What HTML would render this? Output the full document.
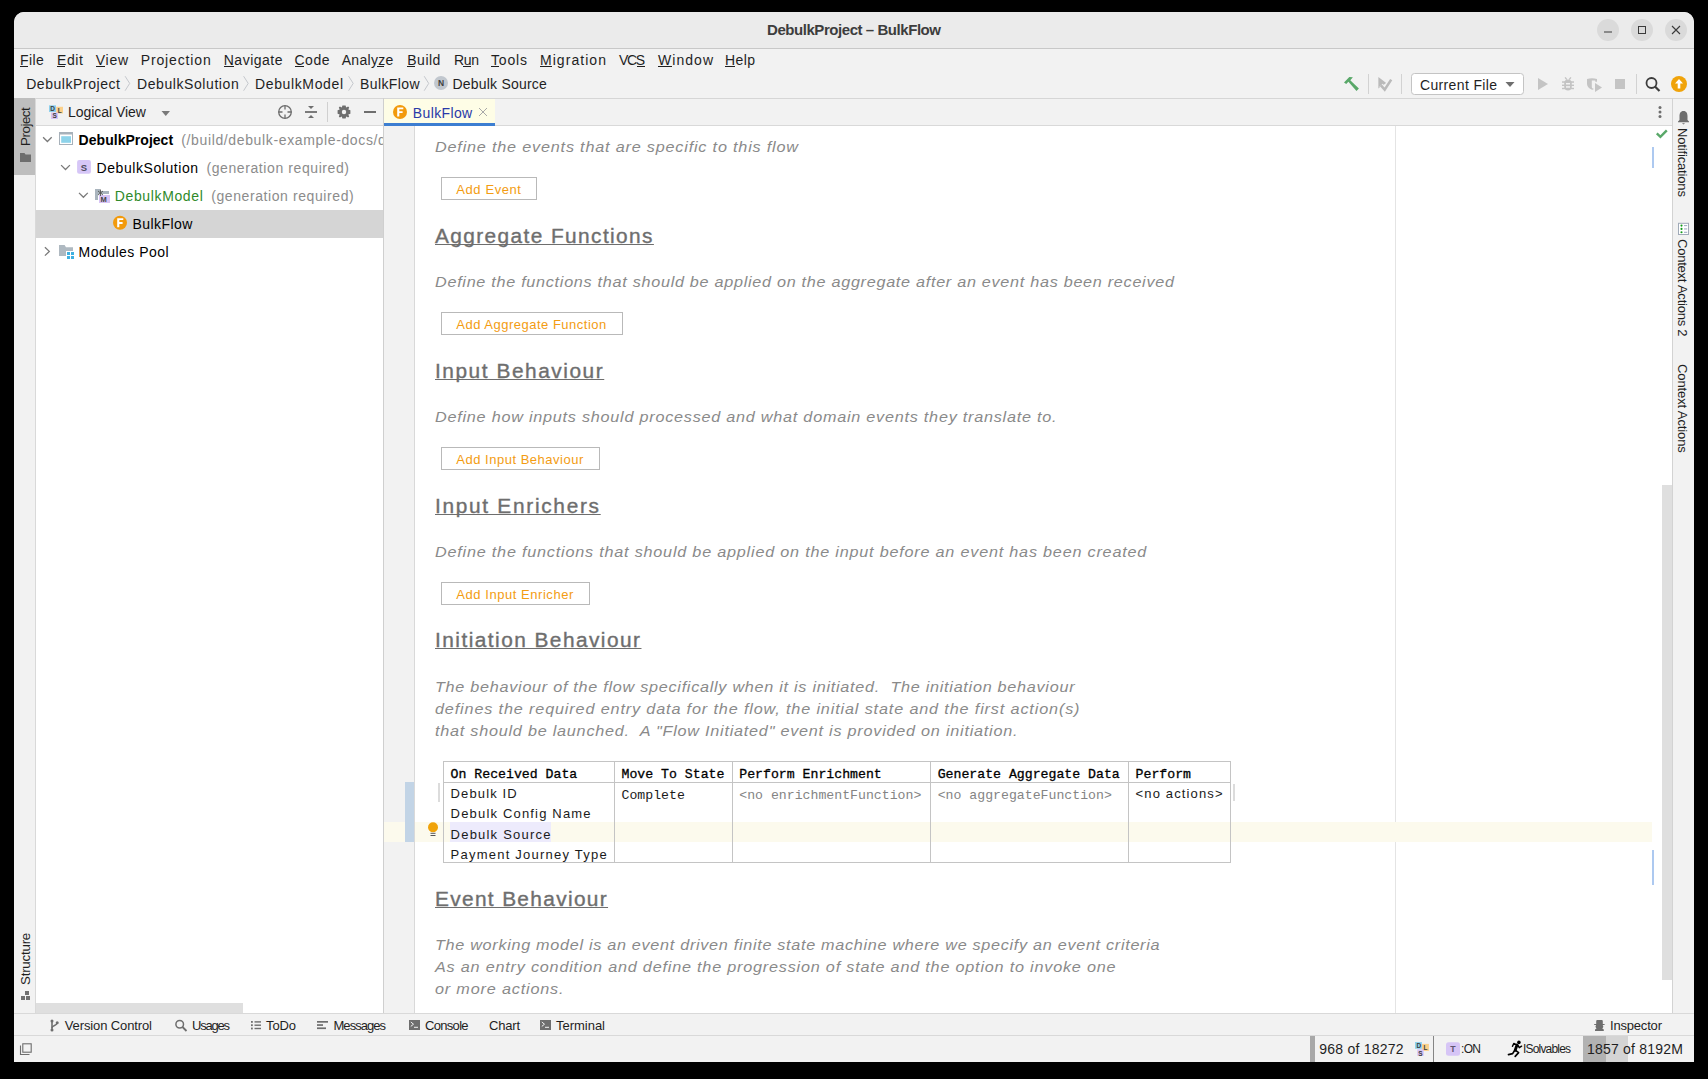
<!DOCTYPE html>
<html><head><meta charset="utf-8"><title>DebulkProject – BulkFlow</title>
<style>
html,body{margin:0;padding:0;background:#000;width:1708px;height:1079px;overflow:hidden;font-family:"Liberation Sans",sans-serif}
.r{position:absolute}
.t{position:absolute;white-space:pre}
.hd{text-decoration:underline;text-underline-offset:1.4px;text-decoration-thickness:1.3px;text-decoration-skip-ink:none;-webkit-text-stroke:0.35px}
.mb{-webkit-text-stroke:0.3px #000}
.btn{position:absolute;border:1px solid #b9b9b9;background:#fff}
svg{position:absolute;overflow:visible}
</style></head><body>
<!-- window -->
<div class="r" style="left:14px;top:12px;width:1680px;height:1050px;background:#f2f2f2;border-radius:10px 10px 0 0;overflow:hidden">
  <div class="r" style="left:0;top:0;width:1680px;height:36px;background:#ebebeb"></div>
  <div class="r" style="left:0;top:36px;width:1680px;height:1px;background:#c8c8c8"></div>
</div>
<!-- separator under toolbar -->
<div class="r" style="left:14px;top:98px;width:1680px;height:1px;background:#d6d6d6"></div>
<!-- left stripe -->
<div class="r" style="left:14px;top:99px;width:21px;height:914px;background:#f2f2f2"></div>
<div class="r" style="left:14px;top:98px;width:21px;height:77px;background:#bebebe"></div>
<div class="r" style="left:35px;top:98px;width:1px;height:915px;background:#d9d9d9"></div>
<!-- project panel -->
<div class="r" style="left:36px;top:99px;width:347px;height:26px;background:#f2f2f2"></div>
<div class="r" style="left:36px;top:125px;width:347px;height:1px;background:#d9d9d9"></div>
<div class="r" style="left:36px;top:126px;width:347px;height:887px;background:#fff"></div>
<div class="r" style="left:36px;top:210px;width:347px;height:28px;background:#d5d5d5"></div>
<div class="r" style="left:36px;top:1003px;width:207px;height:10px;background:#dfdfdf"></div>
<div class="r" style="left:383px;top:98px;width:1px;height:915px;background:#cfcfcf"></div>
<!-- editor tabs -->
<div class="r" style="left:384px;top:99px;width:1288px;height:26px;background:#f2f2f2"></div>
<div class="r" style="left:384px;top:125px;width:1288px;height:1px;background:#d9d9d9"></div>
<div class="r" style="left:384px;top:99px;width:111px;height:24px;background:#fefde6"></div>
<div class="r" style="left:384px;top:123px;width:111px;height:3px;background:#3d7ed1"></div>
<!-- gutter + editor -->
<div class="r" style="left:384px;top:126px;width:30px;height:887px;background:#f2f2f2"></div>
<div class="r" style="left:414px;top:126px;width:1px;height:887px;background:#d9d9d9"></div>
<div class="r" style="left:415px;top:126px;width:1257px;height:887px;background:#fff"></div>
<div class="r" style="left:1395px;top:126px;width:1px;height:887px;background:#e4e4e4"></div>
<div class="r" style="left:384px;top:822px;width:21px;height:20px;background:#fcfaed"></div>
<div class="r" style="left:415px;top:822px;width:1237px;height:20px;background:#fcfaed"></div>
<div class="r" style="left:405px;top:782px;width:9px;height:60px;background:#c2d4e6"></div>
<div class="r" style="left:1662px;top:485px;width:10px;height:495px;background:#dfdfdf"></div>
<div class="r" style="left:1652px;top:147px;width:2px;height:21px;background:#adc9f0"></div>
<div class="r" style="left:1652px;top:850px;width:2px;height:35px;background:#adc9f0"></div>
<!-- right stripe -->
<div class="r" style="left:1672px;top:98px;width:1px;height:915px;background:#d3d3d3"></div>
<div class="r" style="left:1673px;top:99px;width:21px;height:914px;background:#f2f2f2"></div>
<!-- bottom bars -->
<div class="r" style="left:14px;top:1013px;width:1680px;height:1px;background:#d9d9d9"></div>
<div class="r" style="left:14px;top:1014px;width:1680px;height:21px;background:#f2f2f2"></div>
<div class="r" style="left:14px;top:1035px;width:1680px;height:1px;background:#d9d9d9"></div>
<div class="r" style="left:14px;top:1036px;width:1680px;height:26px;background:#f2f2f2"></div>
<div class="r" style="left:1310px;top:1036px;width:5px;height:26px;background:#a8a8a8"></div>
<div class="r" style="left:1433px;top:1036px;width:1px;height:26px;background:#858585"></div>
<div class="r" style="left:1583px;top:1036px;width:23px;height:26px;background:#b2b2b2"></div>
<div class="r" style="left:1606px;top:1036px;width:22px;height:26px;background:#d4d4d4"></div>
<!-- table -->
<div class="r" style="left:443px;top:761px;width:787px;height:100px;border:1px solid #c4c4c4;box-sizing:border-box;width:788px;height:102px"></div>
<div class="r" style="left:443px;top:782px;width:788px;height:1px;background:#c4c4c4"></div>
<div class="r" style="left:614px;top:761px;width:1px;height:102px;background:#c4c4c4"></div>
<div class="r" style="left:732px;top:761px;width:1px;height:102px;background:#c4c4c4"></div>
<div class="r" style="left:930px;top:761px;width:1px;height:102px;background:#c4c4c4"></div>
<div class="r" style="left:1128px;top:761px;width:1px;height:102px;background:#c4c4c4"></div>
<div class="r" style="left:450px;top:822px;width:101px;height:20px;background:#edebfc"></div>
<div class="r" style="left:438px;top:783px;width:2px;height:19px;background:#dcdcdc"></div>
<div class="r" style="left:1233px;top:784px;width:2px;height:17px;background:#dcdcdc"></div>
<div class="btn" style="left:441px;top:177px;width:94px;height:21px"></div><div class="btn" style="left:441px;top:312px;width:180px;height:21px"></div><div class="btn" style="left:441px;top:447px;width:157px;height:21px"></div><div class="btn" style="left:441px;top:582px;width:147px;height:21px"></div>
<!-- window controls -->
<svg style="left:0;top:0" width="1708" height="1079" viewBox="0 0 1708 1079">
  <circle cx="1608" cy="30" r="11" fill="#dadada"/>
  <circle cx="1642" cy="30" r="11" fill="#dadada"/>
  <circle cx="1676" cy="30" r="11" fill="#dadada"/>
  <rect x="1604" y="31.5" width="8" height="1" fill="#3a3a3a"/>
  <rect x="1638.5" y="26.5" width="7" height="7" fill="none" stroke="#3a3a3a" stroke-width="1"/>
  <path d="M1672 26 L1680 34 M1680 26 L1672 34" stroke="#3a3a3a" stroke-width="1.1" fill="none"/>
  <!-- menu mnemonic underlines -->
  <g fill="#1f1f1f">
    <rect x="20" y="66" width="8" height="1"/>
    <rect x="57" y="66" width="8" height="1"/>
    <rect x="96" y="66" width="9" height="1"/>
    <rect x="224" y="66" width="10" height="1"/>
    <rect x="295" y="66" width="9" height="1"/>
    <rect x="377" y="66" width="7" height="1"/>
    <rect x="407" y="66" width="8" height="1"/>
    <rect x="463" y="66" width="8" height="1"/>
    <rect x="491" y="66" width="8" height="1"/>
    <rect x="540" y="66" width="12" height="1"/>
    <rect x="637" y="66" width="8" height="1"/>
    <rect x="658" y="66" width="14" height="1"/>
    <rect x="725" y="66" width="10" height="1"/>
  </g>
  <!-- breadcrumb chevrons -->
  <g stroke="#c5c8cd" stroke-width="1" fill="none">
    <path d="M125.1 76.2 L129.7 83.4 L125.1 90.7"/>
    <path d="M243.6 76.2 L248.2 83.4 L243.6 90.7"/>
    <path d="M348.6 76.2 L353.2 83.4 L348.6 90.7"/>
    <path d="M424.2 76.2 L428.7 83.4 L424.2 90.7"/>
  </g>
  <circle cx="441" cy="83" r="7" fill="#c1c7ce"/>
  <text x="441" y="86.2" font-family="'Liberation Sans',sans-serif" font-weight="700" font-size="8.5" fill="#404040" text-anchor="middle">N</text>
  <!-- toolbar right -->
  <g fill="#59a869">
    <path d="M1344 82.4 L1349.3 77 L1352.9 77.3 L1350.3 80.3 L1353.1 83.1 L1358.9 88.5 L1356.5 90.9 L1348.4 81.8 L1346.2 84.1 Z"/>
  </g>
  <rect x="1368" y="74" width="1" height="20" fill="#d2d2d2"/>
  <path d="M1378.4 77.1 L1386.2 82.9 L1378.4 88.5 Z" fill="#bababa"/>
  <path d="M1380.9 85.4 L1384.7 89.6 L1391.2 79.6" stroke="#f2f2f2" stroke-width="4.6" fill="none"/>
  <path d="M1380.9 85.4 L1384.7 89.6 L1391.2 79.6" stroke="#bababa" stroke-width="2.6" fill="none"/>
  <rect x="1401" y="74" width="1" height="20" fill="#d2d2d2"/>
  <rect x="1411.5" y="73.5" width="112" height="21" rx="3" fill="#fff" stroke="#c4c4c4"/>
  <path d="M1505.5 82 L1514.5 82 L1510 87 Z" fill="#6e6e6e"/>
  <path d="M1538 78 L1548 84 L1538 90 Z" fill="#c4c4c4"/>
  <g fill="#c4c4c4">
    <path d="M1565.1 77.3 L1566.8 79.6 M1570.9 77.3 L1569.2 79.6" stroke="#c4c4c4" stroke-width="1.4"/>
    <path d="M1568 79.6 C1570.5 79.6 1571.8 81 1571.8 83 L1571.8 87 C1571.8 89.2 1570.2 90.6 1568 90.6 C1565.8 90.6 1564.2 89.2 1564.2 87 L1564.2 83 C1564.2 81 1565.5 79.6 1568 79.6 Z"/>
    <rect x="1562" y="81.3" width="12" height="1.5"/>
    <rect x="1562" y="84.6" width="12" height="1.4"/>
    <rect x="1562" y="87.8" width="12" height="1.4"/>
  </g>
  <rect x="1566" y="83" width="4" height="1.5" fill="#f2f2f2"/>
  <rect x="1566" y="86.2" width="4" height="1.5" fill="#f2f2f2"/>
  <g fill="#c4c4c4">
    <path d="M1587 79 Q1592 77.6 1597 79 L1597 81.8 L1595.3 81.8 L1595.3 80.4 L1591.8 80.4 L1591.8 87.3 Q1591.8 88.6 1593.3 88.6 L1593.6 89.3 Q1592.5 90 1591.5 89.6 Q1587.3 87.5 1587 84 Z"/>
    <path d="M1595 83 L1602 87.5 L1595 92 Z"/>
  </g>
  <rect x="1615" y="79" width="10" height="10" fill="#c4c4c4"/>
  <rect x="1636" y="74" width="1" height="20" fill="#d2d2d2"/>
  <circle cx="1651.5" cy="83" r="5" fill="none" stroke="#3d3d3d" stroke-width="1.8"/>
  <path d="M1655 86.5 L1659.5 91" stroke="#3d3d3d" stroke-width="2.2"/>
  <circle cx="1679" cy="84" r="8" fill="#f0a30a"/>
  <path d="M1679 79 L1683 83.5 L1680.3 83.5 L1680.3 88.5 L1677.7 88.5 L1677.7 83.5 L1675 83.5 Z" fill="#fff"/>
  <!-- left stripe -->
  <path d="M20 153 L24.5 153 L25.5 154.5 L31 154.5 L31 162 L20 162 Z" fill="#6e6e6e"/>
  <g fill="#6e6e6e">
    <rect x="25" y="991" width="4" height="4"/>
    <rect x="21" y="996" width="4" height="4"/>
    <rect x="26" y="996" width="4" height="4"/>
  </g>
  <!-- panel header -->
  <rect x="49" y="105.3" width="7" height="6.7" fill="#8fd0ec"/>
  <rect x="56.2" y="106.8" width="6.8" height="6.6" fill="#fbd08a"/>
  <rect x="51" y="112.5" width="7" height="6.5" fill="#d7c4f5"/>
  <g font-family="'Liberation Sans',sans-serif" font-size="6.5" fill="#3d3d3d" font-weight="700" text-anchor="middle">
    <text x="52.6" y="111.1">D</text><text x="59.7" y="112.7">L</text><text x="54.6" y="118.4">S</text>
  </g>
  <path d="M161.5 111 L170 111 L165.75 116 Z" fill="#7a7a7a"/>
  <g stroke="#6e6e6e" fill="none">
    <circle cx="285" cy="112" r="6.3" stroke-width="1.3"/>
    <path d="M285 105.5 V109.5 M285 114.5 V118.5 M278.5 112 H282.5 M287.5 112 H291.5" stroke-width="1.3"/>
    <path d="M305 112 H317" stroke-width="1.8"/>
  </g>
  <g fill="#6e6e6e">
    <path d="M308 106 L314 106 L311 109 Z"/>
    <path d="M308 118 L314 118 L311 115 Z"/>
    <path d="M344 105.6 L345.6 105.6 L346.2 107.6 L348.1 106.5 L349.2 107.6 L348.3 109.5 L350.4 110.2 L350.4 113.8 L348.3 114.5 L349.2 116.4 L348.1 117.5 L346.2 116.4 L345.6 118.4 L342.4 118.4 L341.8 116.4 L339.9 117.5 L338.8 116.4 L339.7 114.5 L337.6 113.8 L337.6 110.2 L339.7 109.5 L338.8 107.6 L339.9 106.5 L341.8 107.6 L342.4 105.6 Z"/>
    <rect x="364" y="111" width="12" height="2"/>
  </g>
  <circle cx="344" cy="112" r="2.2" fill="#f2f2f2"/>
  <rect x="327" y="102" width="1" height="20" fill="#d0d0d0"/>
  <!-- tree -->
  <g stroke="#7a7a7a" stroke-width="1.3" fill="none">
    <path d="M43.1 137.2 L47.4 141.5 L51.7 137.2"/>
    <path d="M61.1 165.1 L65.5 169.5 L69.9 165.1"/>
    <path d="M79 192.9 L83.4 197.3 L87.8 192.9"/>
    <path d="M44.9 247.2 L49.3 251.4 L44.9 255.6"/>
  </g>
  <rect x="59.5" y="132.5" width="13" height="12" fill="#fff" stroke="#a7b1ba" stroke-width="1"/>
  <rect x="59" y="132" width="14" height="2.5" fill="#a7b1ba"/>
  <rect x="61.2" y="136.2" width="9.8" height="6.6" fill="#8dd3ea"/>
  <rect x="77.1" y="160" width="13.8" height="13.7" rx="2" fill="#d6c6f7"/>
  <text x="84" y="170.5" font-family="'Liberation Sans',sans-serif" font-weight="700" font-size="9.5" fill="#4c4a5c" text-anchor="middle">S</text>
  <g fill="#a9b4bd">
    <rect x="95" y="189" width="3" height="11"/>
    <rect x="95" y="189" width="5" height="2"/>
    <rect x="97" y="191" width="12" height="3"/>
  </g>
  <rect x="99" y="195" width="11" height="8" fill="#d7c4f5"/>
  <path d="M100.5 189.5 V196 M98 191 L103 195 M103 191 L98 195" stroke="#555" stroke-width="0.9"/>
  <text x="103.6" y="201.7" font-family="'Liberation Sans',sans-serif" font-weight="700" font-size="7.5" fill="#444" text-anchor="middle">M</text>
  <circle cx="120" cy="222.8" r="7" fill="#f29a0c"/>
  <path d="M117.2 218.3 H123.3 V220.1 H119.3 V222.1 H122.6 V223.9 H119.3 V227.3 H117.2 Z" fill="#fff"/>
  <g fill="#afb9c1">
    <path d="M59 245 L64.6 245 L66 247.2 L73 247.2 L73 256 L59 256 Z"/>
  </g>
  <rect x="66" y="251" width="9" height="9" fill="#fff"/>
  <g fill="#3fb0e0">
    <rect x="67" y="252" width="3" height="3"/><rect x="71" y="252" width="3" height="3"/>
    <rect x="67" y="256" width="3" height="3"/><rect x="71" y="256" width="3" height="3"/>
  </g>
  <!-- tab -->
  <circle cx="400" cy="112" r="7" fill="#f29a0c"/>
  <path d="M397.2 107.5 H403.3 V109.3 H399.3 V111.3 H402.6 V113.1 H399.3 V116.5 H397.2 Z" fill="#fff"/>
  <path d="M479 108 L487 116 M487 108 L479 116" stroke="#a8a8a8" stroke-width="1"/>
  <!-- editor right -->
  <g fill="#6e6e6e">
    <circle cx="1660" cy="107.5" r="1.5"/><circle cx="1660" cy="112" r="1.5"/><circle cx="1660" cy="116.5" r="1.5"/>
  </g>
  <path d="M1656.8 133.3 L1660.4 136.8 L1666.8 130.3" stroke="#59a869" stroke-width="2.4" fill="none"/>
  <!-- lightbulb -->
  <circle cx="433" cy="827.3" r="5" fill="#f0a30a"/>
  <path d="M430 830 L436 830 L435 832 L431 832 Z" fill="#f0a30a"/>
  <rect x="430.5" y="832.8" width="5" height="1" fill="#555"/>
  <rect x="430.5" y="835" width="5" height="1" fill="#555"/>
  <!-- right stripe -->
  <path d="M1683.5 111 C1680.5 111 1679.5 113.5 1679.5 116 L1679.5 120 L1678 121.5 L1678 122.3 L1689 122.3 L1689 121.5 L1687.5 120 L1687.5 116 C1687.5 113.5 1686.5 111 1683.5 111 Z" fill="#6e6e6e"/>
  <path d="M1682 123.2 L1685 123.2 L1683.5 124.5 Z" fill="#6e6e6e"/>
  <rect x="1678.5" y="223.3" width="10" height="11.2" fill="#fff" stroke="#a0aab8" stroke-width="1"/>
  <g fill="#129a1a"><circle cx="1681.5" cy="225.6" r="1.05"/><circle cx="1681.5" cy="228.9" r="1.05"/><circle cx="1681.5" cy="232.2" r="1.05"/></g>
  <g fill="#8e9ab8"><rect x="1684" y="225.2" width="3.2" height="0.9"/><rect x="1684" y="228.5" width="3.2" height="0.9"/><rect x="1684" y="231.8" width="3.2" height="0.9"/></g>
  <!-- bottom toolbar icons -->
  <g stroke="#6e6e6e" fill="none">
    <path d="M52 1021 V1030" stroke-width="1.6"/>
    <path d="M52 1028 C52 1025 57 1026 57 1023" stroke-width="1.5"/>
  </g>
  <g fill="#6e6e6e">
    <circle cx="52" cy="1021" r="1.5"/><circle cx="52" cy="1030" r="1.5"/><circle cx="57.2" cy="1022.8" r="1.5"/>
  </g>
  <circle cx="179.7" cy="1024.2" r="3.8" fill="none" stroke="#6e6e6e" stroke-width="1.5"/>
  <path d="M182.5 1027 L186.5 1031" stroke="#6e6e6e" stroke-width="1.8"/>
  <g fill="#6e6e6e">
    <rect x="251" y="1021" width="1.8" height="1.8"/><rect x="254.5" y="1021.2" width="6.5" height="1.4"/>
    <rect x="251" y="1024.3" width="1.8" height="1.8"/><rect x="254.5" y="1024.5" width="6.5" height="1.4"/>
    <rect x="251" y="1027.6" width="1.8" height="1.8"/><rect x="254.5" y="1027.8" width="6.5" height="1.4"/>
    <rect x="317" y="1021" width="11" height="1.7"/>
    <rect x="317" y="1024.2" width="6" height="1.7"/>
    <rect x="317" y="1027.4" width="9" height="1.7"/>
    <rect x="409" y="1020" width="11" height="10"/>
    <rect x="540" y="1020" width="11" height="10"/>
    <path d="M1597.2 1020.1 H1601.8 Q1602.8 1020.1 1602.8 1021.2 V1024 H1604.6 V1024.9 H1602.8 V1025.5 Q1603.8 1026.5 1603 1027.5 L1602.3 1028.5 L1603.8 1029.4 V1031 H1595 V1029.4 L1596.5 1028.5 L1595.8 1027.5 Q1595 1026.5 1596 1025.5 V1024.9 H1594.2 V1024 H1596.2 V1021.2 Q1596.2 1020.1 1597.2 1020.1 Z"/>
  </g>
  <path d="M410.8 1022 L413.5 1024.2 L410.8 1026.4 M414 1027.3 H418" stroke="#f2f2f2" stroke-width="1" fill="none"/>
  <path d="M541.8 1022 L544.5 1024.2 L541.8 1026.4 M545 1027.3 H549" stroke="#f2f2f2" stroke-width="1" fill="none"/>
  <!-- status bar -->
  <path d="M20.5 1045.5 V1054.5 H29.5" stroke="#6e6e6e" stroke-width="1.1" fill="none"/>
  <rect x="22.8" y="1043.8" width="8.4" height="8.4" fill="none" stroke="#6e6e6e" stroke-width="1.1"/>
  <rect x="1415" y="1042" width="6.9" height="6.8" fill="#8fd0ec"/>
  <rect x="1422" y="1043.9" width="6.9" height="7" fill="#fbd08a"/>
  <rect x="1417.2" y="1049.3" width="6.5" height="6.5" fill="#d7c4f5"/>
  <g font-family="'Liberation Sans',sans-serif" font-size="6.5" fill="#3d3d3d" font-weight="700" text-anchor="middle">
    <text x="1418.9" y="1048.3">D</text><text x="1425.6" y="1050.3">L</text><text x="1420.4" y="1055.5">S</text>
  </g>
  <rect x="1446" y="1042.2" width="14" height="13.5" rx="2.5" fill="#d6c5f6"/>
  <text x="1453" y="1052.2" font-family="'Liberation Sans',sans-serif" font-weight="700" font-size="8.8" fill="#5f5670" text-anchor="middle">T</text>
  <g fill="none" stroke="#000" stroke-linecap="round" stroke-linejoin="round">
    <path d="M1517 1045 L1515.2 1050.3" stroke-width="2.8"/>
    <path d="M1516.3 1044.6 L1513.8 1043.5 L1512.5 1046.3" stroke-width="1.5"/>
    <path d="M1517.8 1045.2 L1519.3 1047.6 L1521.6 1046.2" stroke-width="1.5"/>
    <path d="M1514.8 1050.3 L1512.6 1053.6 L1508.5 1054.6" stroke-width="1.7"/>
    <path d="M1515.6 1050.4 L1518.6 1052.6 L1515.2 1056.3" stroke-width="1.7"/>
  </g>
  <circle cx="1518.9" cy="1042.4" r="1.8" fill="#000"/>
</svg>

<div id="t0" class="t" style="left:767.00px;font-size:15px;font-family:'Liberation Sans', sans-serif;color:#3d3d3d;font-weight:700;letter-spacing:-0.444px;top:21.90px;line-height:15px;">DebulkProject – BulkFlow</div><div id="t1" class="t" style="left:20.00px;font-size:14px;font-family:'Liberation Sans', sans-serif;color:#1f1f1f;letter-spacing:0.396px;top:53.15px;line-height:14px;">File</div><div id="t2" class="t" style="left:57.00px;font-size:14px;font-family:'Liberation Sans', sans-serif;color:#1f1f1f;letter-spacing:0.625px;top:53.15px;line-height:14px;">Edit</div><div id="t3" class="t" style="left:95.75px;font-size:14px;font-family:'Liberation Sans', sans-serif;color:#1f1f1f;letter-spacing:0.719px;top:53.15px;line-height:14px;">View</div><div id="t4" class="t" style="left:140.75px;font-size:14px;font-family:'Liberation Sans', sans-serif;color:#1f1f1f;letter-spacing:0.859px;top:53.15px;line-height:14px;">Projection</div><div id="t5" class="t" style="left:223.75px;font-size:14px;font-family:'Liberation Sans', sans-serif;color:#1f1f1f;letter-spacing:0.498px;top:53.15px;line-height:14px;">Navigate</div><div id="t6" class="t" style="left:294.50px;font-size:14px;font-family:'Liberation Sans', sans-serif;color:#1f1f1f;letter-spacing:0.510px;top:53.15px;line-height:14px;">Code</div><div id="t7" class="t" style="left:341.75px;font-size:14px;font-family:'Liberation Sans', sans-serif;color:#1f1f1f;letter-spacing:0.281px;top:53.15px;line-height:14px;">Analyze</div><div id="t8" class="t" style="left:407.30px;font-size:14px;font-family:'Liberation Sans', sans-serif;color:#1f1f1f;letter-spacing:0.490px;top:53.15px;line-height:14px;">Build</div><div id="t9" class="t" style="left:454.00px;font-size:14px;font-family:'Liberation Sans', sans-serif;color:#1f1f1f;letter-spacing:-0.344px;top:53.15px;line-height:14px;">Run</div><div id="t10" class="t" style="left:491.00px;font-size:14px;font-family:'Liberation Sans', sans-serif;color:#1f1f1f;letter-spacing:0.828px;top:53.15px;line-height:14px;">Tools</div><div id="t11" class="t" style="left:540.00px;font-size:14px;font-family:'Liberation Sans', sans-serif;color:#1f1f1f;letter-spacing:1.051px;top:53.15px;line-height:14px;">Migration</div><div id="t12" class="t" style="left:619.00px;font-size:14px;font-family:'Liberation Sans', sans-serif;color:#1f1f1f;letter-spacing:-1.398px;top:53.15px;line-height:14px;">VCS</div><div id="t13" class="t" style="left:658.00px;font-size:14px;font-family:'Liberation Sans', sans-serif;color:#1f1f1f;letter-spacing:1.041px;top:53.15px;line-height:14px;">Window</div><div id="t14" class="t" style="left:725.00px;font-size:14px;font-family:'Liberation Sans', sans-serif;color:#1f1f1f;letter-spacing:0.401px;top:53.15px;line-height:14px;">Help</div><div id="t15" class="t" style="left:26.20px;font-size:14px;font-family:'Liberation Sans', sans-serif;color:#1f1f1f;letter-spacing:0.554px;top:77.15px;line-height:14px;">DebulkProject</div><div id="t16" class="t" style="left:137.00px;font-size:14px;font-family:'Liberation Sans', sans-serif;color:#1f1f1f;letter-spacing:0.579px;top:77.15px;line-height:14px;">DebulkSolution</div><div id="t17" class="t" style="left:255.00px;font-size:14px;font-family:'Liberation Sans', sans-serif;color:#1f1f1f;letter-spacing:0.628px;top:77.15px;line-height:14px;">DebulkModel</div><div id="t18" class="t" style="left:360.00px;font-size:14px;font-family:'Liberation Sans', sans-serif;color:#1f1f1f;letter-spacing:0.386px;top:77.15px;line-height:14px;">BulkFlow</div><div id="t19" class="t" style="left:452.50px;font-size:14px;font-family:'Liberation Sans', sans-serif;color:#1f1f1f;letter-spacing:0.206px;top:77.15px;line-height:14px;">Debulk Source</div><div id="t20" class="t" style="left:1420.00px;font-size:14px;font-family:'Liberation Sans', sans-serif;color:#1f1f1f;letter-spacing:0.351px;top:77.65px;line-height:14px;">Current File</div><div id="t21" class="t" style="left:78.60px;font-size:14px;font-family:'Liberation Sans', sans-serif;color:#000;font-weight:700;letter-spacing:0.030px;top:133.25px;line-height:14px;">DebulkProject</div><div id="t22" class="t" style="left:181.20px;font-size:14px;font-family:'Liberation Sans', sans-serif;color:#8c8c8c;letter-spacing:0.641px;top:133.25px;line-height:14px;">(/build/debulk-example-docs/</div><div id="t23" class="t" style="left:378.00px;font-size:14px;font-family:'Liberation Sans', sans-serif;color:#8c8c8c;top:133.25px;line-height:14px;width:5.0px;overflow:hidden;">debulk</div><div id="t24" class="t" style="left:96.60px;font-size:14px;font-family:'Liberation Sans', sans-serif;color:#000;letter-spacing:0.564px;top:161.15px;line-height:14px;">DebulkSolution</div><div id="t25" class="t" style="left:206.50px;font-size:14px;font-family:'Liberation Sans', sans-serif;color:#8c8c8c;letter-spacing:0.588px;top:161.15px;line-height:14px;">(generation required)</div><div id="t26" class="t" style="left:114.80px;font-size:14px;font-family:'Liberation Sans', sans-serif;color:#2f8a2a;letter-spacing:0.628px;top:189.15px;line-height:14px;">DebulkModel</div><div id="t27" class="t" style="left:211.20px;font-size:14px;font-family:'Liberation Sans', sans-serif;color:#8c8c8c;letter-spacing:0.588px;top:189.15px;line-height:14px;">(generation required)</div><div id="t28" class="t" style="left:132.40px;font-size:14px;font-family:'Liberation Sans', sans-serif;color:#000;letter-spacing:0.458px;top:217.15px;line-height:14px;">BulkFlow</div><div id="t29" class="t" style="left:78.60px;font-size:14px;font-family:'Liberation Sans', sans-serif;color:#000;letter-spacing:0.470px;top:245.15px;line-height:14px;">Modules Pool</div><div id="t30" class="t" style="left:68.00px;font-size:14px;font-family:'Liberation Sans', sans-serif;color:#1f1f1f;letter-spacing:-0.033px;top:105.15px;line-height:14px;">Logical View</div><div id="t31" class="t" style="left:412.80px;font-size:14px;font-family:'Liberation Sans', sans-serif;color:#2a3aa8;letter-spacing:0.372px;top:105.75px;line-height:14px;">BulkFlow</div><div id="t32" class="t" style="left:434.90px;font-size:15px;font-family:'Liberation Sans', sans-serif;color:#8a8a8a;font-style:italic;letter-spacing:0.747px;top:139.10px;line-height:15px;transform:scaleX(1.08);transform-origin:0 0;">Define the events that are specific to this flow</div><div id="t33" class="t" style="left:456.30px;font-size:13px;font-family:'Liberation Sans', sans-serif;color:#f39c12;letter-spacing:0.588px;top:182.99px;line-height:13px;">Add Event</div><div id="t34" class="t hd" style="left:435.00px;font-size:19.3px;font-family:'Liberation Sans', sans-serif;color:#6e6e6e;letter-spacing:1.303px;top:226.56px;line-height:19.3px;transform:scaleX(1.08);transform-origin:0 0;">Aggregate Functions</div><div id="t35" class="t" style="left:434.90px;font-size:15px;font-family:'Liberation Sans', sans-serif;color:#8a8a8a;font-style:italic;letter-spacing:0.657px;top:274.30px;line-height:15px;transform:scaleX(1.08);transform-origin:0 0;">Define the functions that should be applied on the aggregate after an event has been received</div><div id="t36" class="t" style="left:456.30px;font-size:13px;font-family:'Liberation Sans', sans-serif;color:#f39c12;letter-spacing:0.500px;top:317.99px;line-height:13px;">Add Aggregate Function</div><div id="t37" class="t hd" style="left:435.00px;font-size:19.3px;font-family:'Liberation Sans', sans-serif;color:#6e6e6e;letter-spacing:1.443px;top:361.56px;line-height:19.3px;transform:scaleX(1.08);transform-origin:0 0;">Input Behaviour</div><div id="t38" class="t" style="left:434.90px;font-size:15px;font-family:'Liberation Sans', sans-serif;color:#8a8a8a;font-style:italic;letter-spacing:0.702px;top:409.30px;line-height:15px;transform:scaleX(1.08);transform-origin:0 0;">Define how inputs should processed and what domain events they translate to.</div><div id="t39" class="t" style="left:456.30px;font-size:13px;font-family:'Liberation Sans', sans-serif;color:#f39c12;letter-spacing:0.510px;top:452.99px;line-height:13px;">Add Input Behaviour</div><div id="t40" class="t hd" style="left:435.00px;font-size:19.3px;font-family:'Liberation Sans', sans-serif;color:#6e6e6e;letter-spacing:1.583px;top:496.56px;line-height:19.3px;transform:scaleX(1.08);transform-origin:0 0;">Input Enrichers</div><div id="t41" class="t" style="left:434.90px;font-size:15px;font-family:'Liberation Sans', sans-serif;color:#8a8a8a;font-style:italic;letter-spacing:0.727px;top:544.30px;line-height:15px;transform:scaleX(1.08);transform-origin:0 0;">Define the functions that should be applied on the input before an event has been created</div><div id="t42" class="t" style="left:456.30px;font-size:13px;font-family:'Liberation Sans', sans-serif;color:#f39c12;letter-spacing:0.548px;top:587.99px;line-height:13px;">Add Input Enricher</div><div id="t43" class="t hd" style="left:435.00px;font-size:19.3px;font-family:'Liberation Sans', sans-serif;color:#6e6e6e;letter-spacing:1.359px;top:631.16px;line-height:19.3px;transform:scaleX(1.08);transform-origin:0 0;">Initiation Behaviour</div><div id="t44" class="t" style="left:434.90px;font-size:15px;font-family:'Liberation Sans', sans-serif;color:#8a8a8a;font-style:italic;letter-spacing:0.669px;top:679.30px;line-height:15px;transform:scaleX(1.08);transform-origin:0 0;">The behaviour of the flow specifically when it is initiated.  The initiation behaviour</div><div id="t45" class="t" style="left:434.90px;font-size:15px;font-family:'Liberation Sans', sans-serif;color:#8a8a8a;font-style:italic;letter-spacing:0.792px;top:701.30px;line-height:15px;transform:scaleX(1.08);transform-origin:0 0;">defines the required entry data for the flow, the initial state and the first action(s)</div><div id="t46" class="t" style="left:434.90px;font-size:15px;font-family:'Liberation Sans', sans-serif;color:#8a8a8a;font-style:italic;letter-spacing:0.706px;top:723.30px;line-height:15px;transform:scaleX(1.08);transform-origin:0 0;">that should be launched.  A &quot;Flow Initiated&quot; event is provided on initiation.</div><div id="t47" class="t hd" style="left:435.00px;font-size:19.3px;font-family:'Liberation Sans', sans-serif;color:#6e6e6e;letter-spacing:1.250px;top:889.66px;line-height:19.3px;transform:scaleX(1.08);transform-origin:0 0;">Event Behaviour</div><div id="t48" class="t" style="left:434.90px;font-size:15px;font-family:'Liberation Sans', sans-serif;color:#8a8a8a;font-style:italic;letter-spacing:0.647px;top:937.00px;line-height:15px;transform:scaleX(1.08);transform-origin:0 0;">The working model is an event driven finite state machine where we specify an event criteria</div><div id="t49" class="t" style="left:434.90px;font-size:15px;font-family:'Liberation Sans', sans-serif;color:#8a8a8a;font-style:italic;letter-spacing:0.732px;top:959.00px;line-height:15px;transform:scaleX(1.08);transform-origin:0 0;">As an entry condition and define the progression of state and the option to invoke one</div><div id="t50" class="t" style="left:434.90px;font-size:15px;font-family:'Liberation Sans', sans-serif;color:#8a8a8a;font-style:italic;letter-spacing:0.762px;top:981.00px;line-height:15px;transform:scaleX(1.08);transform-origin:0 0;">or more actions.</div><div id="t51" class="t mb" style="left:450.60px;font-size:13.2px;font-family:'Liberation Mono', monospace;color:#000;top:767.79px;line-height:13.2px;">On Received Data</div><div id="t52" class="t mb" style="left:621.50px;font-size:13.2px;font-family:'Liberation Mono', monospace;color:#000;top:767.79px;line-height:13.2px;">Move To State</div><div id="t53" class="t mb" style="left:739.30px;font-size:13.2px;font-family:'Liberation Mono', monospace;color:#000;top:767.79px;line-height:13.2px;">Perform Enrichment</div><div id="t54" class="t mb" style="left:937.70px;font-size:13.2px;font-family:'Liberation Mono', monospace;color:#000;top:767.79px;line-height:13.2px;">Generate Aggregate Data</div><div id="t55" class="t mb" style="left:1135.60px;font-size:13.2px;font-family:'Liberation Mono', monospace;color:#000;top:767.79px;line-height:13.2px;">Perform</div><div id="t56" class="t" style="left:450.60px;font-size:13px;font-family:'Liberation Sans', sans-serif;color:#1a1a1a;letter-spacing:1.115px;top:787.29px;line-height:13px;">Debulk ID</div><div id="t57" class="t" style="left:450.60px;font-size:13px;font-family:'Liberation Sans', sans-serif;color:#1a1a1a;letter-spacing:1.179px;top:807.49px;line-height:13px;">Debulk Config Name</div><div id="t58" class="t" style="left:450.60px;font-size:13px;font-family:'Liberation Sans', sans-serif;color:#1a1a1a;letter-spacing:1.210px;top:827.69px;line-height:13px;">Debulk Source</div><div id="t59" class="t" style="left:450.60px;font-size:13px;font-family:'Liberation Sans', sans-serif;color:#1a1a1a;letter-spacing:1.230px;top:847.89px;line-height:13px;">Payment Journey Type</div><div id="t60" class="t" style="left:621.50px;font-size:13.2px;font-family:'Liberation Mono', monospace;color:#1a1a1a;top:788.69px;line-height:13.2px;">Complete</div><div id="t61" class="t" style="left:739.30px;font-size:13.2px;font-family:'Liberation Mono', monospace;color:#848484;top:788.69px;line-height:13.2px;">&lt;no enrichmentFunction&gt;</div><div id="t62" class="t" style="left:937.70px;font-size:13.2px;font-family:'Liberation Mono', monospace;color:#848484;top:788.69px;line-height:13.2px;">&lt;no aggregateFunction&gt;</div><div id="t63" class="t" style="left:1135.60px;font-size:13px;font-family:'Liberation Sans', sans-serif;color:#1a1a1a;letter-spacing:1.141px;top:786.99px;line-height:13px;">&lt;no actions&gt;</div><div id="t64" class="t" style="left:64.75px;font-size:13px;font-family:'Liberation Sans', sans-serif;color:#1f1f1f;letter-spacing:-0.117px;top:1019.19px;line-height:13px;">Version Control</div><div id="t65" class="t" style="left:192.00px;font-size:13px;font-family:'Liberation Sans', sans-serif;color:#1f1f1f;letter-spacing:-1.216px;top:1019.19px;line-height:13px;">Usages</div><div id="t66" class="t" style="left:266.00px;font-size:13px;font-family:'Liberation Sans', sans-serif;color:#1f1f1f;letter-spacing:-0.120px;top:1019.19px;line-height:13px;">ToDo</div><div id="t67" class="t" style="left:333.50px;font-size:13px;font-family:'Liberation Sans', sans-serif;color:#1f1f1f;letter-spacing:-0.964px;top:1019.19px;line-height:13px;">Messages</div><div id="t68" class="t" style="left:425.00px;font-size:13px;font-family:'Liberation Sans', sans-serif;color:#1f1f1f;letter-spacing:-0.684px;top:1019.19px;line-height:13px;">Console</div><div id="t69" class="t" style="left:489.00px;font-size:13px;font-family:'Liberation Sans', sans-serif;color:#1f1f1f;letter-spacing:-0.199px;top:1019.19px;line-height:13px;">Chart</div><div id="t70" class="t" style="left:556.00px;font-size:13px;font-family:'Liberation Sans', sans-serif;color:#1f1f1f;letter-spacing:-0.018px;top:1019.19px;line-height:13px;">Terminal</div><div id="t71" class="t" style="left:1610.00px;font-size:13px;font-family:'Liberation Sans', sans-serif;color:#1f1f1f;letter-spacing:-0.186px;top:1019.19px;line-height:13px;">Inspector</div><div id="t72" class="t" style="left:1319.30px;font-size:14px;font-family:'Liberation Sans', sans-serif;color:#1f1f1f;letter-spacing:0.232px;top:1042.15px;line-height:14px;">968 of 18272</div><div id="t73" class="t" style="left:1461.00px;font-size:12px;font-family:'Liberation Sans', sans-serif;color:#1f1f1f;letter-spacing:-0.672px;top:1043.04px;line-height:12px;">:ON</div><div id="t74" class="t" style="left:1523.00px;font-size:12px;font-family:'Liberation Sans', sans-serif;color:#1f1f1f;letter-spacing:-0.819px;top:1043.04px;line-height:12px;">ISolvables</div><div id="t75" class="t" style="left:1587.00px;font-size:14px;font-family:'Liberation Sans', sans-serif;color:#1f1f1f;letter-spacing:0.216px;top:1042.15px;line-height:14px;">1857 of 8192M</div><div id="t76" class="t" style="left:18.65px;font-size:13.4px;font-family:'Liberation Sans', sans-serif;color:#1f1f1f;letter-spacing:-0.481px;top:145.80px;line-height:13.4px;transform:rotate(-90deg);transform-origin:0 0;">Project</div><div id="t77" class="t" style="left:18.65px;font-size:13.4px;font-family:'Liberation Sans', sans-serif;color:#1f1f1f;letter-spacing:-0.254px;top:985.10px;line-height:13.4px;transform:rotate(-90deg);transform-origin:0 0;">Structure</div><div id="t78" class="t" style="left:1689.01px;font-size:13px;font-family:'Liberation Sans', sans-serif;color:#1f1f1f;letter-spacing:-0.159px;top:128.00px;line-height:13px;transform:rotate(90deg);transform-origin:0 0;">Notifications</div><div id="t79" class="t" style="left:1689.01px;font-size:13px;font-family:'Liberation Sans', sans-serif;color:#1f1f1f;letter-spacing:-0.223px;top:239.20px;line-height:13px;transform:rotate(90deg);transform-origin:0 0;">Context Actions 2</div><div id="t80" class="t" style="left:1689.01px;font-size:13px;font-family:'Liberation Sans', sans-serif;color:#1f1f1f;letter-spacing:-0.109px;top:363.60px;line-height:13px;transform:rotate(90deg);transform-origin:0 0;">Context Actions</div>
</body></html>
